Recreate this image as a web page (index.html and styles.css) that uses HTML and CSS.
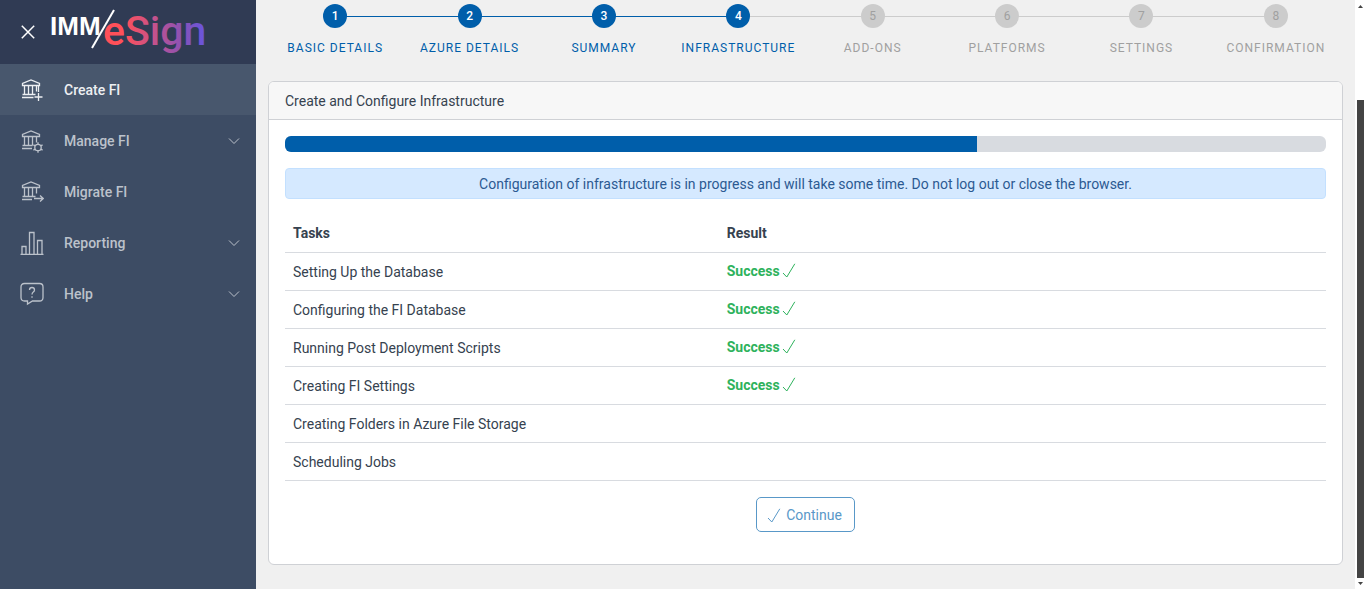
FILE: index.html
```html
<!DOCTYPE html>
<html lang="en">
<head>
<meta charset="utf-8">
<title>Create FI</title>
<link rel="stylesheet" href="styles.css">
</head>
<body>
<svg class="sprite" aria-hidden="true">
  <symbol id="bank" viewBox="0 0 24 24">
    <path d="M2.5 7.5V5.500L11 2l8.500 3.500v2zM4.500 7.500v9M8.500 7.500v9M12.500 7.500v9M16.500 7.500v6"/>
  </symbol>
  <symbol id="chevron" viewBox="0 0 12 8"><path d="M1 1.500 6 6.500 11 1.500"/></symbol>
  <symbol id="check" viewBox="0 0 14 16"><path d="M1 10 4.800 14 12.800 .8"/></symbol>
</svg>
<div class="app">
  <aside class="sidebar">
    <header class="brand">
      <button class="close" type="button" aria-label="Close menu">
        <svg class="close-icon" viewBox="0 0 14 14"><path d="M.8.8l12.400 12.400M13.200.8.8 13.200"/></svg>
      </button>
      <svg class="logo" viewBox="0 0 180 64" role="img" aria-label="IMM eSign">
        <defs>
          <linearGradient id="brand-fill" gradientUnits="userSpaceOnUse" x1="55" y1="0" x2="155" y2="0">
            <stop offset="0" stop-color="#ff5059"/>
            <stop offset=".2" stop-color="#ff5059"/>
            <stop offset=".5" stop-color="#c5528c"/>
            <stop offset=".8" stop-color="#8652b8"/>
            <stop offset="1" stop-color="#6a55dc"/>
          </linearGradient>
        </defs>
        <text class="logo-imm" x="1" y="35">IMM</text>
        <text class="logo-esign" x="54" y="45" fill="url(#brand-fill)">eSign</text>
        <path class="logo-slash" d="M43 48 65 10"/>
      </svg>
    </header>
    <nav class="menu">
      <a class="item active" href="#create">
        <svg class="icon" viewBox="0 0 24 24"><use href="#bank"/><path d="M2.500 16.500h13M2 19.500h11.500M18.500 8v6M18.500 15v8M14.500 19h8"/></svg>
        <span>Create FI</span>
      </a>
      <a class="item" href="#manage">
        <svg class="icon" viewBox="0 0 24 24"><use href="#bank"/><path d="M2.500 16.500h10M2 19.500h10"/><circle cx="18" cy="18.500" r="3.200"/><path d="M18 13.200v2.100M18 21.700v2.100M13.400 15.900l1.800 1M20.800 20.100l1.800 1M13.400 21.100l1.800-1M20.800 16.900l1.800-1"/></svg>
        <span>Manage FI</span>
        <svg class="chevron"><use href="#chevron"/></svg>
      </a>
      <a class="item" href="#migrate">
        <svg class="icon" viewBox="0 0 24 24"><use href="#bank"/><path d="M2.500 16.500h13M2 19.500h10M14 18.500h9M20 15.500l3.200 3-3.200 3"/></svg>
        <span>Migrate FI</span>
      </a>
      <a class="item" href="#reporting">
        <svg class="icon" viewBox="0 0 24 24"><path d="M.5 23.500h23M2 23v-7.500h4V23M9.500 23V1.500h4.500V23M17.500 23V9.500h4.500V23"/></svg>
        <span>Reporting</span>
        <svg class="chevron"><use href="#chevron"/></svg>
      </a>
      <a class="item" href="#help">
        <svg class="icon" viewBox="0 0 24 24"><path d="M4.500 1.500h15q3.500 0 3.500 3.500v10.500q0 3.500-3.500 3.500h-7L7.500 22v-3h-3Q1 19 1 15.500V5q0-3.500 3.500-3.500zM9.500 8q0-2.500 2.500-2.500T14.500 8q0 1.200-1.200 2T12 12.500M12 14.300v1.400"/></svg>
        <span>Help</span>
        <svg class="chevron"><use href="#chevron"/></svg>
      </a>
    </nav>
  </aside>

  <main class="content">
    <ol class="steps">
      <li class="step done"><span class="dot">1</span><span>BASIC DETAILS</span></li>
      <li class="step done"><span class="dot">2</span><span>AZURE DETAILS</span></li>
      <li class="step done"><span class="dot">3</span><span>SUMMARY</span></li>
      <li class="step done"><span class="dot">4</span><span>INFRASTRUCTURE</span></li>
      <li class="step"><span class="dot">5</span><span>ADD-ONS</span></li>
      <li class="step"><span class="dot">6</span><span>PLATFORMS</span></li>
      <li class="step"><span class="dot">7</span><span>SETTINGS</span></li>
      <li class="step"><span class="dot">8</span><span>CONFIRMATION</span></li>
    </ol>

    <section class="card">
      <h1 class="card-title">Create and Configure Infrastructure</h1>
      <div class="card-body">
        <div class="progress" role="progressbar" aria-label="Configuration progress" aria-valuenow="66" aria-valuemin="0" aria-valuemax="100">
          <div class="progress-fill" style="width: 66.5%"></div>
        </div>
        <p class="notice">Configuration of infrastructure is in progress and will take some time. Do not log out or close the browser.</p>
        <table class="tasks">
          <thead><tr><th class="task-col" scope="col">Tasks</th><th scope="col">Result</th></tr></thead>
          <tbody>
            <tr><td>Setting Up the Database</td><td class="result"><span class="success">Success<svg class="check"><use href="#check"/></svg></span></td></tr>
            <tr><td>Configuring the FI Database</td><td class="result"><span class="success">Success<svg class="check"><use href="#check"/></svg></span></td></tr>
            <tr><td>Running Post Deployment Scripts</td><td class="result"><span class="success">Success<svg class="check"><use href="#check"/></svg></span></td></tr>
            <tr><td>Creating FI Settings</td><td class="result"><span class="success">Success<svg class="check"><use href="#check"/></svg></span></td></tr>
            <tr><td>Creating Folders in Azure File Storage</td><td class="result"></td></tr>
            <tr><td>Scheduling Jobs</td><td class="result"></td></tr>
          </tbody>
        </table>
        <button class="continue" type="button" disabled><svg class="check"><use href="#check"/></svg>Continue</button>
      </div>
    </section>
  </main>

  <div class="scrollbar" aria-hidden="true">
    <svg class="arrow" viewBox="0 0 5 3"><path d="M0 3 2.500 0 5 3z"/></svg>
    <div class="thumb"></div>
    <svg class="arrow" viewBox="0 0 5 3"><path d="M0 0 2.500 3 5 0z"/></svg>
  </div>
</div>
</body>
</html>
```
FILE: styles.css
```css
* { box-sizing: border-box; }
body {
  margin: 0;
  font: 14px/21px Roboto, "Liberation Sans", sans-serif;
  color: #36424f;
  background: #f0f0f0;
}
svg { fill: none; stroke: currentColor; flex: none; }
.sprite { position: absolute; width: 0; height: 0; }
.app { display: flex; height: 100vh; overflow: hidden; }

.sidebar { width: 256px; flex: none; background: #3d4c64; }
.brand {
  display: flex;
  align-items: center;
  height: 64px;
  padding-left: 21px;
  background: #303b54;
}
.close { display: flex; padding: 0; border: 0; background: none; color: #fff; }
.close-icon { width: 14px; height: 14px; stroke-width: 1.5; }
.logo { width: 180px; height: 64px; margin-left: 14px; }
.logo text { stroke: none; }
.logo .logo-imm { fill: #fff; font: 700 26px "Liberation Sans", sans-serif; }
.logo .logo-esign { font: 500 41px Roboto, sans-serif; }
.logo-slash { stroke: #fff; stroke-width: 2; }

.item {
  display: flex;
  align-items: center;
  height: 51px;
  padding: 0 16px 0 20px;
  color: #bcc2cb;
  font-weight: 500;
  text-decoration: none;
}
.item span { padding-top: 2px; }
.item.active { background: #48576d; color: #edeff2; }
.icon { width: 24px; height: 24px; margin-right: 20px; stroke-width: 1.3; }
.chevron { width: 12px; height: 8px; margin-left: auto; stroke-width: 1; }

.content { flex: 1; min-width: 0; padding: 4px 12px 24px; }
.steps { display: flex; margin: 0 0 22px; padding: 0; list-style: none; }
.step {
  display: flex;
  flex: 1;
  flex-direction: column;
  align-items: center;
  gap: 10px;
  position: relative;
  color: #a0a0a0;
  font-size: 12px;
  line-height: 21px;
  letter-spacing: 1px;
}
.step + .step::before {
  content: "";
  position: absolute;
  top: 12px;
  left: -50%;
  width: 100%;
  height: 1px;
  background: #ccc;
}
.step.done { color: #005eaa; }
.step + .step.done::before { background: #005eaa; }
.dot {
  position: relative;
  z-index: 1;
  width: 24px;
  height: 24px;
  border-radius: 50%;
  background: #ccc;
  line-height: 25px;
  letter-spacing: 0;
  text-align: center;
}
.done .dot { background: #005eaa; color: #fff; font-weight: 500; }

.card { border: 1px solid #cfd1d5; border-radius: 6px; background: #fff; overflow: hidden; }
.card-title {
  margin: 0;
  padding: 9px 16px 7px;
  border-bottom: 1px solid #cfd1d5;
  background: #f7f7f7;
  font-size: 14px;
  font-weight: 400;
  line-height: 21px;
}
.card-body { padding: 16px 16px 32px; }
.progress { height: 16px; border-radius: 6px; background: #d8dbe0; overflow: hidden; }
.progress-fill { height: 100%; background: #005eaa; }
.notice {
  margin: 16px 0;
  padding: 5px 16px 3px;
  border: 1px solid #c3e0ff;
  border-radius: 4px;
  background: #d5e9ff;
  color: #2c5a92;
  text-align: center;
}
.tasks { width: 100%; table-layout: fixed; border-collapse: separate; border-spacing: 0; }
.tasks th, .tasks td {
  height: 38px;
  padding: 8px;
  border-bottom: 1px solid #d8dbe0;
  text-align: left;
}
.tasks td { padding: 9px 8px 7px; }
.tasks .result { padding: 7px 8px 9px; }
.tasks th { font-weight: 700; }
.task-col { width: calc(100% * 5 / 12); }
.success { display: flex; align-items: center; gap: 2px; line-height: 20px; color: #2eb25c; font-weight: 700; }
.check { width: 14px; height: 16px; }
.continue {
  display: flex;
  align-items: center;
  gap: 5px;
  margin: 16px auto 0;
  padding: 7px 12px 5px 10px;
  border: 1px solid #5998c8;
  border-radius: 5px;
  background: #fff;
  color: #5998c8;
  font: inherit;
}

.scrollbar {
  display: flex;
  flex: none;
  flex-direction: column;
  align-items: center;
  width: 11px;
  padding: 5px 2px 4px;
  background: #fff;
}
.arrow { width: 5px; height: 3px; fill: #444; stroke: none; }
.thumb { flex: 1; width: 7px; margin: 92px 0 4px; background: #444; }
```
